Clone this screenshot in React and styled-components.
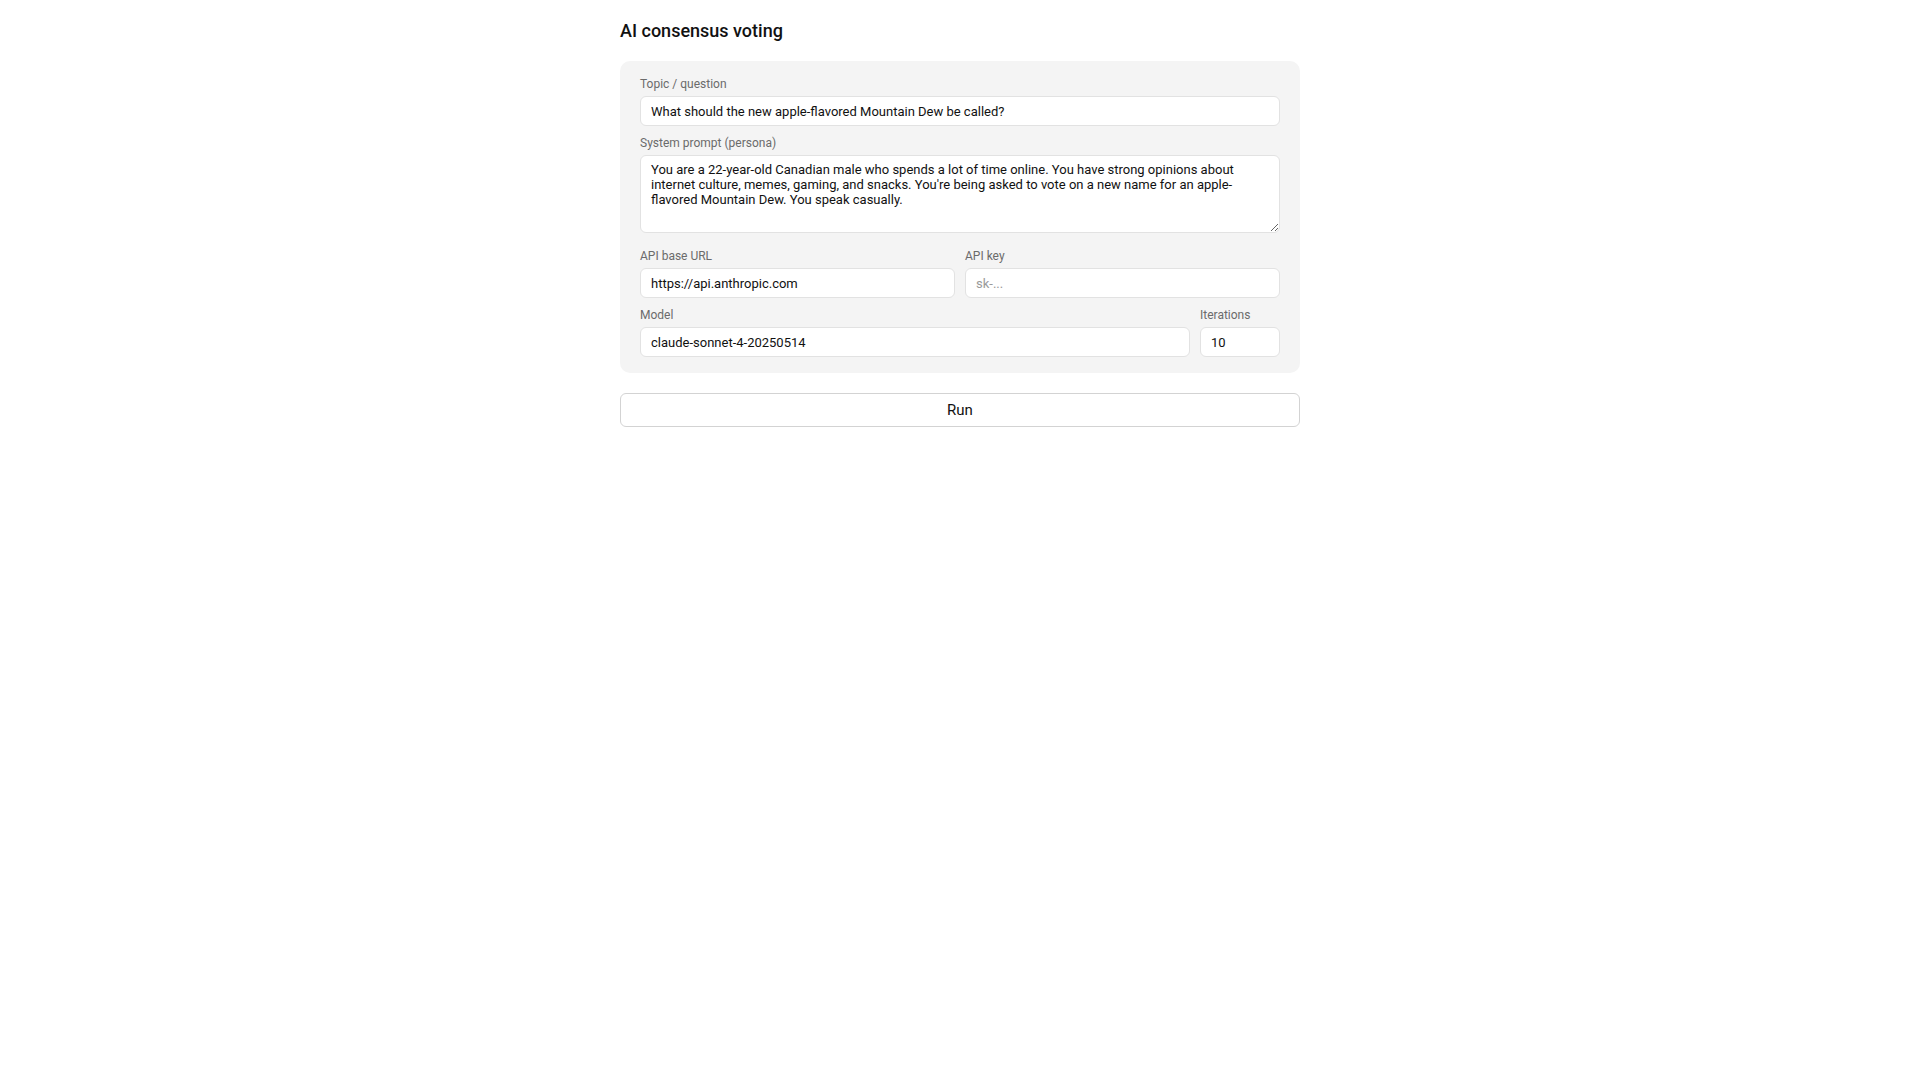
import React, { useState } from 'react'
import styled, { createGlobalStyle } from 'styled-components'

const GlobalStyle = createGlobalStyle`
  html, body {
    margin: 0;
    background: #fff;
    color: #111;
    font-family: Roboto, 'Liberation Sans', Arial, sans-serif;
  }
  * {
    box-sizing: border-box;
  }
`

const Page = styled.main`
  max-width: 680px;
  margin: 0 auto;
  padding: 20px 0;
`

const Title = styled.h1`
  margin: 0 0 20px;
  font-size: 18px;
  font-weight: 500;
  line-height: normal;
  color: #111;
`

const Panel = styled.section`
  display: flex;
  flex-direction: column;
  gap: 10px;
  padding: 16px 20px;
  background: #f4f4f4;
  border-radius: 10px;
`

const Row = styled.div`
  display: grid;
  grid-template-columns: ${(p) => p.$cols || '1fr 1fr'};
  gap: 10px;
`

const Field = styled.label`
  display: flex;
  flex-direction: column;
  min-width: 0;
`

const Label = styled.span`
  display: block;
  margin-bottom: 5px;
  font-size: 12px;
  line-height: normal;
  color: #6b6b6b;
`

const Input = styled.input`
  display: block;
  width: 100%;
  height: 30px;
  padding: 0 10px;
  border: 1px solid #e2e2e2;
  border-radius: 6px;
  background: #fff;
  color: #111;
  font-family: inherit;
  font-size: 13px;
  outline: none;

  &::placeholder {
    color: #9a9a9a;
  }
`

const TextArea = styled.textarea`
  display: block;
  width: 100%;
  height: 78px;
  margin-bottom: 6px;
  padding: 6px 10px;
  border: 1px solid #e2e2e2;
  border-radius: 6px;
  background: #fff;
  color: #111;
  font-family: inherit;
  font-size: 13px;
  line-height: normal;
  resize: vertical;
  outline: none;
`

const RunButton = styled.button`
  display: block;
  width: 100%;
  height: 34px;
  margin-top: 20px;
  border: 1px solid #d3d3d3;
  border-radius: 6px;
  background: #fff;
  color: #111;
  font-family: inherit;
  font-size: 15px;
  cursor: pointer;

  &:hover {
    background: #fafafa;
  }
`

const App = () => {
  const [topic, setTopic] = useState(
    'What should the new apple-flavored Mountain Dew be called?'
  )
  const [persona, setPersona] = useState(
    "You are a 22-year-old Canadian male who spends a lot of time online. You have strong opinions about internet culture, memes, gaming, and snacks. You're being asked to vote on a new name for an apple-flavored Mountain Dew. You speak casually."
  )
  const [baseUrl, setBaseUrl] = useState('https://api.anthropic.com')
  const [apiKey, setApiKey] = useState('')
  const [model, setModel] = useState('claude-sonnet-4-20250514')
  const [iterations, setIterations] = useState('10')

  return (
    <Page>
      <GlobalStyle />
      <Title>AI consensus voting</Title>
      <Panel>
        <Field>
          <Label>Topic / question</Label>
          <Input value={topic} onChange={(e) => setTopic(e.target.value)} />
        </Field>
        <Field>
          <Label>System prompt (persona)</Label>
          <TextArea
            value={persona}
            onChange={(e) => setPersona(e.target.value)}
          />
        </Field>
        <Row>
          <Field>
            <Label>API base URL</Label>
            <Input
              value={baseUrl}
              onChange={(e) => setBaseUrl(e.target.value)}
            />
          </Field>
          <Field>
            <Label>API key</Label>
            <Input
              type='password'
              placeholder='sk-...'
              value={apiKey}
              onChange={(e) => setApiKey(e.target.value)}
            />
          </Field>
        </Row>
        <Row $cols='1fr 80px'>
          <Field>
            <Label>Model</Label>
            <Input value={model} onChange={(e) => setModel(e.target.value)} />
          </Field>
          <Field>
            <Label>Iterations</Label>
            <Input
              type='number'
              value={iterations}
              onChange={(e) => setIterations(e.target.value)}
            />
          </Field>
        </Row>
      </Panel>
      <RunButton>Run</RunButton>
    </Page>
  )
}

export default App
